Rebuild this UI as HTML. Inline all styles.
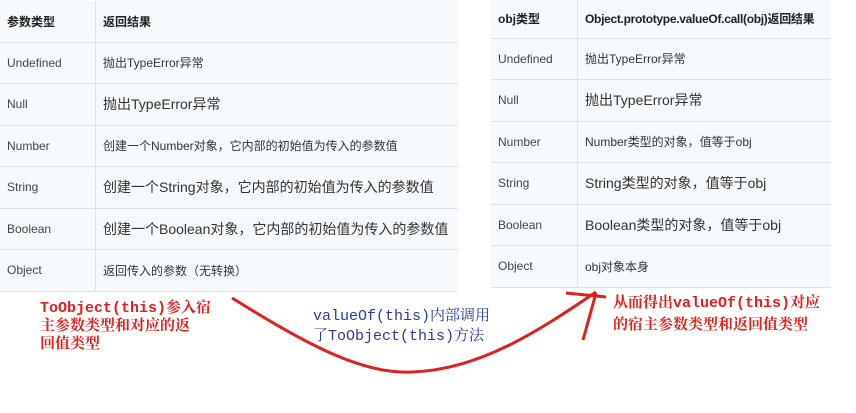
<!DOCTYPE html>
<html><head><meta charset="utf-8"><style>
body{margin:0;width:856px;height:413px;background:#fff;position:relative;overflow:hidden;font-family:"Liberation Sans","Noto Sans CJK SC",sans-serif;}
table{position:absolute;border-collapse:collapse;background:#f7fafc;color:#333;}
td{border-top:1px solid #dde3ea;border-bottom:1px solid #dde3ea;padding:0 7px;font-size:12px;height:40.5px;white-space:nowrap}
td:first-child{border-right:1px solid #dde3ea;color:#444;}
th{font-size:12px;font-weight:bold;text-align:left;padding:0 7px;border-right:1px solid #dde3ea;color:#222;white-space:nowrap}
th:last-child{border-right:none}
.b{font-size:14px}
.r{position:absolute;color:#e0201c;font-family:"Liberation Mono","Noto Serif CJK SC",monospace;font-size:13px;line-height:18px;font-weight:bold;white-space:nowrap}
.u{position:absolute;color:#2b3a9c;font-family:"Liberation Mono","Noto Serif CJK SC",monospace;font-size:15px;line-height:20px;white-space:nowrap}
</style></head><body>
<table style="left:0;top:1px;width:458px">
<tr style="height:41px"><th style="width:81px">参数类型</th><th>返回结果</th></tr>
<tr><td>Undefined</td><td>抛出TypeError异常</td></tr>
<tr><td>Null</td><td class="b">抛出TypeError异常</td></tr>
<tr><td>Number</td><td>创建一个Number对象，它内部的初始值为传入的参数值</td></tr>
<tr><td>String</td><td class="b">创建一个String对象，它内部的初始值为传入的参数值</td></tr>
<tr><td>Boolean</td><td class="b">创建一个Boolean对象，它内部的初始值为传入的参数值</td></tr>
<tr><td>Object</td><td>返回传入的参数（无转换）</td></tr>
</table>
<table style="left:491px;top:0;width:340px">
<tr style="height:38px"><th style="width:72px">obj类型</th><th style="letter-spacing:-0.3px">Object.prototype.valueOf.call(obj)返回结果</th></tr>
<tr><td>Undefined</td><td>抛出TypeError异常</td></tr>
<tr><td>Null</td><td class="b">抛出TypeError异常</td></tr>
<tr><td>Number</td><td>Number类型的对象，值等于obj</td></tr>
<tr><td>String</td><td class="b">String类型的对象，值等于obj</td></tr>
<tr><td>Boolean</td><td class="b">Boolean类型的对象，值等于obj</td></tr>
<tr><td>Object</td><td>obj对象本身</td></tr>
</table>
<svg style="position:absolute;left:0;top:0" width="856" height="413">
<path d="M232 298 C300 340 360 375 412 372 C480 370 540 330 596 292" fill="none" stroke="#e0201c" stroke-width="3"/>
<path d="M566 293 L606 297 M596 293 L583 340" fill="none" stroke="#e0201c" stroke-width="3"/>
</svg>
<div class="r" style="left:40px;top:300px;font-size:15px">ToObject(this)参入宿<br>主参数类型和对应的返<br>回值类型</div>
<div class="u" style="left:313px;top:307px">valueOf(this)内部调用<br>了ToObject(this)方法</div>
<div class="r" style="left:613px;top:293px;line-height:22px;font-size:15px">从而得出valueOf(this)对应<br>的宿主参数类型和返回值类型</div>
</body></html>
